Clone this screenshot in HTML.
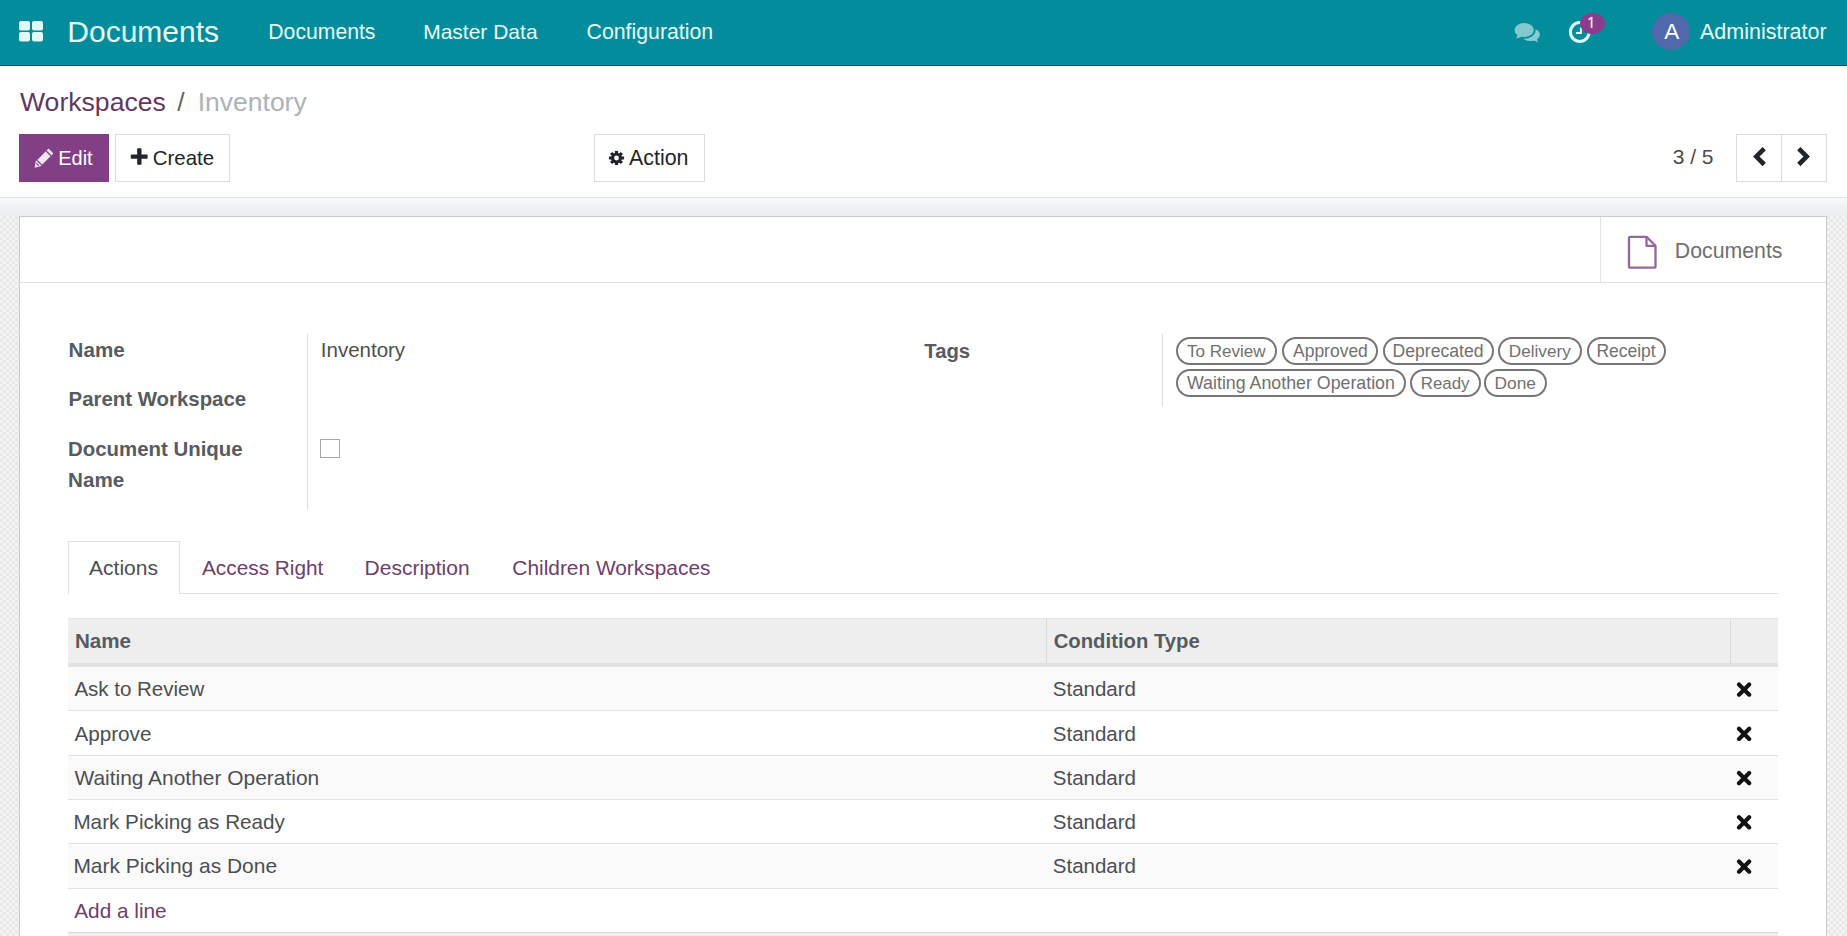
<!DOCTYPE html>
<html><head><meta charset="utf-8"><title>Workspaces / Inventory</title>
<style>
html,body{margin:0;padding:0;}
body{width:1847px;height:936px;overflow:hidden;position:relative;background:#fff;font-family:"Liberation Sans",sans-serif;}
.a{position:absolute;box-sizing:border-box;}
.t{position:absolute;white-space:nowrap;line-height:1;font-family:"Liberation Sans",sans-serif;}
.nav{left:0;top:0;width:1847px;height:66px;background:#038d9c;border-bottom:1px solid #065a63;box-shadow:inset 0 -1px 0 #14889a;}
.cp{left:0;top:66px;width:1847px;height:132px;background:#fff;border-bottom:1px solid #e2e2e2;}
.band{left:0;top:198px;width:1847px;height:18px;background:linear-gradient(#f7f8fa,#ecedf0);}
.bg{left:0;top:216px;width:1847px;height:720px;background-color:#efefef;
  background-image:conic-gradient(#e8e8e8 25%,#f4f4f4 0 50%,#e8e8e8 0 75%,#f4f4f4 0);background-size:6px 6px;}
.sheet{left:19px;top:216px;width:1808px;height:760px;background:#fff;border:1px solid #c9cacd;}
.btn{border:1px solid #dcdcdc;background:#fff;}
.tag{position:absolute;box-sizing:border-box;height:28px;border:2px solid #767676;border-radius:14px;font-size:17px;line-height:24px;color:#6e6e6e;text-align:center;white-space:nowrap;font-family:"Liberation Sans",sans-serif;}
.row{left:68px;width:1710px;height:44.25px;border-bottom:1px solid #e2e2e2;}
.x{position:absolute;width:14px;height:14px;}
</style></head><body>
<div class="a nav"></div>
<!-- apps icon -->
<svg class="a" style="left:18px;top:20px" width="27" height="23" viewBox="0 0 27 23">
 <rect x="1" y="1" width="11" height="9.4" rx="2" fill="#e0fafa"/>
 <rect x="14" y="1" width="11" height="9.4" rx="2" fill="#e0fafa"/>
 <rect x="1" y="12" width="11" height="9.4" rx="2" fill="#e0fafa"/>
 <rect x="14" y="12" width="11" height="9.4" rx="2" fill="#e0fafa"/>
</svg>
<!-- chat icon -->
<svg class="a" style="left:1510px;top:18px" width="35" height="28" viewBox="0 0 35 28">
 <ellipse cx="20.6" cy="16.6" rx="9.3" ry="6.4" fill="#84cdd3"/>
 <path d="M23 21.5L28 24.8 26.5 20z" fill="#84cdd3"/>
 <ellipse cx="14.2" cy="12" rx="11.4" ry="8.8" fill="#038d9c"/>
 <path d="M6.5 16L5.2 21.4 12.5 18.2z" fill="#038d9c" stroke="#038d9c" stroke-width="1.6"/>
 <ellipse cx="14.2" cy="12" rx="9.7" ry="7.1" fill="#82c8cd"/>
 <path d="M7.5 16.5L6.3 20.6 12.5 18.6z" fill="#82c8cd"/>
</svg>
<!-- activity clock -->
<svg class="a" style="left:1567px;top:19px" width="26" height="26" viewBox="0 0 26 26">
 <circle cx="12.8" cy="13" r="9.4" fill="none" stroke="#dffafa" stroke-width="3"/>
 <path d="M13.9 8.5v5.5h-5" fill="none" stroke="#dffafa" stroke-width="2"/>
</svg>
<div class="a" style="left:1579.5px;top:12.5px;width:25px;height:21px;border-radius:50%;background:#8c3c8d;"></div>
<svg class="a" style="left:1586px;top:15px" width="10" height="15" viewBox="0 0 10 15">
 <path d="M5.6 2v11" stroke="#fbeefb" stroke-width="1.7"/>
 <path d="M6 2.2L2.6 4.6" stroke="#fbeefb" stroke-width="1.4"/>
</svg>
<!-- avatar -->
<div class="a" style="left:1652px;top:12.5px;width:37.5px;height:37.5px;border-radius:50%;background:#5069ab;"></div>

<div class="a cp"></div>
<div class="a band"></div>
<div class="a bg"></div>
<div class="a sheet"></div>

<!-- buttons -->
<div class="a" style="left:19px;top:134px;width:90px;height:48px;background:#823f85;"></div>
<svg class="a" style="left:33px;top:147px" width="22" height="22" viewBox="0 0 22 22">
 <path d="M15.6 1.6l4.8 4.8-12.9 12.9-5.9 1.5 1.1-6.3z" fill="#f3e6f3"/>
 <path d="M13.2 4l4.8 4.8M4.2 13.5l4.6 4.6" stroke="#823f85" stroke-width="1.3" fill="none"/>
 <path d="M3.4 16.2l2.4 2.4" stroke="#823f85" stroke-width="1.2"/>
</svg>
<div class="a btn" style="left:115px;top:134px;width:115px;height:48px;"></div>
<svg class="a" style="left:130px;top:148px" width="18" height="18" viewBox="0 0 18 18">
 <rect x="7.2" y="0.2" width="4.3" height="16.6" rx="0.8" fill="#212529"/>
 <rect x="0.8" y="6.4" width="16.8" height="4.3" rx="0.8" fill="#212529"/>
</svg>
<div class="a btn" style="left:594px;top:134px;width:111px;height:48px;"></div>
<svg class="a" style="left:608px;top:150px" width="17" height="16" viewBox="0 0 17 16">
 <g fill="#212529" transform="translate(8.5 8) scale(1 0.93)">
  <circle r="5.6"/>
  <rect x="-1.6" y="-7.6" width="3.2" height="15.2"/>
  <rect x="-1.6" y="-7.6" width="3.2" height="15.2" transform="rotate(45)"/>
  <rect x="-1.6" y="-7.6" width="3.2" height="15.2" transform="rotate(90)"/>
  <rect x="-1.6" y="-7.6" width="3.2" height="15.2" transform="rotate(135)"/>
 </g>
 <circle cx="8.5" cy="8" r="2.4" fill="#fff"/>
</svg>
<div class="a btn" style="left:1736px;top:134px;width:91px;height:48px;"></div>
<div class="a" style="left:1781px;top:134px;width:1px;height:48px;background:#dcdcdc;"></div>
<svg class="a" style="left:1751px;top:145px" width="17" height="23" viewBox="0 0 17 23">
 <path d="M13.2 3.7L5.3 11.6l7.9 7.9" fill="none" stroke="#212529" stroke-width="4.6" stroke-linejoin="miter"/>
</svg>
<svg class="a" style="left:1795px;top:145px" width="17" height="23" viewBox="0 0 17 23">
 <path d="M3.8 3.7l7.9 7.9-7.9 7.9" fill="none" stroke="#212529" stroke-width="4.6" stroke-linejoin="miter"/>
</svg>

<!-- button box -->
<div class="a" style="left:20px;top:282px;width:1806px;height:1px;background:#dee2e6;"></div>
<div class="a" style="left:1600px;top:217px;width:1px;height:65px;background:#e4e4e4;"></div>
<svg class="a" style="left:1627px;top:234px" width="32" height="37" viewBox="0 0 32 37">
 <path d="M3 2.8h16.5l9 9v20.9a1 1 0 0 1-1 1H3a1 1 0 0 1-1-1V3.8a1 1 0 0 1 1-1z" fill="none" stroke="#93679a" stroke-width="2.3" stroke-linejoin="round"/>
 <path d="M19.5 2.8v9h9" fill="none" stroke="#93679a" stroke-width="2.3" stroke-linejoin="round"/>
</svg>

<!-- field dividers -->
<div class="a" style="left:307px;top:334px;width:1px;height:176px;background:#dcdcdc;"></div>
<div class="a" style="left:1162px;top:334px;width:1px;height:72px;background:#dcdcdc;"></div>
<div class="a" style="left:320px;top:439px;width:20px;height:19px;border:1px solid #a6a6a6;background:#fff;"></div>

<!-- notebook -->
<div class="a" style="left:68px;top:541px;width:112px;height:53px;border:1px solid #dee2e6;border-bottom:none;background:#fff;"></div>
<div class="a" style="left:180px;top:593px;width:1598px;height:1px;background:#dee2e6;"></div>

<!-- table -->
<div class="a" style="left:68px;top:618px;width:1710px;height:49px;background:#eeeeee;border-top:1px solid #e4e4e4;border-bottom:4px solid #dfe1e3;"></div>
<div class="a" style="left:1046px;top:619px;width:1px;height:44px;background:#d9d9d9;"></div>
<div class="a" style="left:1730px;top:619px;width:1px;height:44px;background:#d9d9d9;"></div>
<div class="a row" style="top:667px;height:44px;background:#fafafa;"></div>
<div class="a row" style="top:711px;height:45px;background:#fff;"></div>
<div class="a row" style="top:756px;height:44px;background:#fafafa;"></div>
<div class="a row" style="top:800px;height:44px;background:#fff;"></div>
<div class="a row" style="top:844px;height:45px;background:#fafafa;"></div>
<div class="a" style="left:68px;top:932px;width:1710px;height:10px;background:#eeeeee;border-top:1px solid #d8d8d8;"></div>
<svg class="a" style="left:1736px;top:681px" width="16" height="200" viewBox="0 0 16 200">
 <g stroke="#111" stroke-width="4.1" stroke-linecap="round">
  <path d="M3 3.50L13.2 13.70M13.2 3.50L3 13.70"/>
  <path d="M3 47.75L13.2 57.95M13.2 47.75L3 57.95"/>
  <path d="M3 92.00L13.2 102.20M13.2 92.00L3 102.20"/>
  <path d="M3 136.25L13.2 146.45M13.2 136.25L3 146.45"/>
  <path d="M3 180.50L13.2 190.70M13.2 180.50L3 190.70"/>
 </g>
</svg>

<div class="tag" style="left:1175.5px;top:336.6px;width:101.7px;"></div>
<div class="tag" style="left:1281.5px;top:336.6px;width:96.7px;"></div>
<div class="tag" style="left:1382.6px;top:336.6px;width:111.9px;"></div>
<div class="tag" style="left:1498.4px;top:336.6px;width:83.9px;"></div>
<div class="tag" style="left:1586.5px;top:336.6px;width:79.7px;"></div>
<div class="tag" style="left:1175.5px;top:368.7px;width:230.6px;"></div>
<div class="tag" style="left:1410.3px;top:368.7px;width:70.5px;"></div>
<div class="tag" style="left:1484.1px;top:368.7px;width:62.5px;"></div>
<div class="t" style="left:67.30px;top:16.71px;font-size:30px;font-weight:400;color:#e6fbfb;">Documents</div>
<div class="t" style="left:268.30px;top:20.92px;font-size:21.2px;font-weight:400;color:#e6fbfb;">Documents</div>
<div class="t" style="left:423.20px;top:20.91px;font-size:21px;font-weight:400;color:#e6fbfb;">Master Data</div>
<div class="t" style="left:586.50px;top:21.91px;font-size:21.3px;font-weight:400;color:#e6fbfb;">Configuration</div>
<div class="t" style="left:1700.00px;top:21.61px;font-size:21.5px;font-weight:400;color:#e6fbfb;">Administrator</div>
<div class="t" style="left:1664.20px;top:20.61px;font-size:22.5px;font-weight:400;color:#ffffff;">A</div>
<div class="t" style="left:20.00px;top:88.91px;font-size:26.6px;font-weight:400;color:#633663;">Workspaces</div>
<div class="t" style="left:177.20px;top:88.90px;font-size:26.5px;font-weight:400;color:#666666;">/</div>
<div class="t" style="left:197.70px;top:88.81px;font-size:26.5px;font-weight:400;color:#adb2b8;">Inventory</div>
<div class="t" style="left:58.20px;top:148.01px;font-size:20px;font-weight:400;color:#ffffff;">Edit</div>
<div class="t" style="left:152.80px;top:148.01px;font-size:20.4px;font-weight:400;color:#212529;">Create</div>
<div class="t" style="left:629.00px;top:148.12px;font-size:21.4px;font-weight:400;color:#212529;">Action</div>
<div class="t" style="left:1672.70px;top:145.50px;font-size:21px;font-weight:400;color:#4c4c4c;">3 / 5</div>
<div class="t" style="left:1674.80px;top:240.91px;font-size:21.3px;font-weight:400;color:#6f6f6f;">Documents</div>
<div class="t" style="left:68.60px;top:339.91px;font-size:20.6px;font-weight:700;color:#565b61;">Name</div>
<div class="t" style="left:68.60px;top:388.82px;font-size:20.4px;font-weight:700;color:#565b61;">Parent Workspace</div>
<div class="t" style="left:68.10px;top:439.41px;font-size:20.4px;font-weight:700;color:#565b61;">Document Unique</div>
<div class="t" style="left:68.10px;top:470.21px;font-size:20.6px;font-weight:700;color:#565b61;">Name</div>
<div class="t" style="left:320.80px;top:339.81px;font-size:20.5px;font-weight:400;color:#4a4f55;">Inventory</div>
<div class="t" style="left:924.30px;top:340.50px;font-size:20.3px;font-weight:700;color:#565b61;">Tags</div>
<div class="t" style="left:89.10px;top:557.22px;font-size:21px;font-weight:400;color:#4a4f55;">Actions</div>
<div class="t" style="left:202.00px;top:558.21px;font-size:20.8px;font-weight:400;color:#6c406c;">Access Right</div>
<div class="t" style="left:364.60px;top:557.22px;font-size:21px;font-weight:400;color:#6c406c;">Description</div>
<div class="t" style="left:512.30px;top:558.21px;font-size:20.9px;font-weight:400;color:#6c406c;">Children Workspaces</div>
<div class="t" style="left:74.90px;top:631.21px;font-size:20.6px;font-weight:700;color:#565b61;">Name</div>
<div class="t" style="left:1053.70px;top:630.61px;font-size:20.3px;font-weight:700;color:#565b61;">Condition Type</div>
<div class="t" style="left:74.40px;top:679.40px;font-size:20.5px;font-weight:400;color:#4a4f55;">Ask to Review</div>
<div class="t" style="left:1052.80px;top:679.40px;font-size:20.5px;font-weight:400;color:#4a4f55;">Standard</div>
<div class="t" style="left:74.40px;top:723.65px;font-size:20.7px;font-weight:400;color:#4a4f55;">Approve</div>
<div class="t" style="left:1052.80px;top:723.65px;font-size:20.5px;font-weight:400;color:#4a4f55;">Standard</div>
<div class="t" style="left:74.40px;top:767.91px;font-size:20.95px;font-weight:400;color:#4a4f55;">Waiting Another Operation</div>
<div class="t" style="left:1052.80px;top:767.90px;font-size:20.5px;font-weight:400;color:#4a4f55;">Standard</div>
<div class="t" style="left:73.40px;top:812.15px;font-size:20.7px;font-weight:400;color:#4a4f55;">Mark Picking as Ready</div>
<div class="t" style="left:1052.80px;top:812.15px;font-size:20.5px;font-weight:400;color:#4a4f55;">Standard</div>
<div class="t" style="left:73.40px;top:856.41px;font-size:20.95px;font-weight:400;color:#4a4f55;">Mark Picking as Done</div>
<div class="t" style="left:1052.80px;top:856.40px;font-size:20.5px;font-weight:400;color:#4a4f55;">Standard</div>
<div class="t" style="left:74.20px;top:901.02px;font-size:20.8px;font-weight:400;color:#6c406c;">Add a line</div>
<div class="t" style="left:1187.00px;top:342.80px;font-size:17.04px;font-weight:400;color:#707070;">To Review</div>
<div class="t" style="left:1293.00px;top:342.81px;font-size:17.49px;font-weight:400;color:#707070;">Approved</div>
<div class="t" style="left:1392.50px;top:342.81px;font-size:17.6px;font-weight:400;color:#707070;">Deprecated</div>
<div class="t" style="left:1508.80px;top:342.82px;font-size:17.15px;font-weight:400;color:#707070;">Delivery</div>
<div class="t" style="left:1596.40px;top:342.81px;font-size:17.49px;font-weight:400;color:#707070;">Receipt</div>
<div class="t" style="left:1187.00px;top:374.62px;font-size:17.8px;font-weight:400;color:#707070;">Waiting Another Operation</div>
<div class="t" style="left:1420.70px;top:375.61px;font-size:16.9px;font-weight:400;color:#707070;">Ready</div>
<div class="t" style="left:1494.50px;top:374.61px;font-size:17.35px;font-weight:400;color:#707070;">Done</div>
</body></html>
